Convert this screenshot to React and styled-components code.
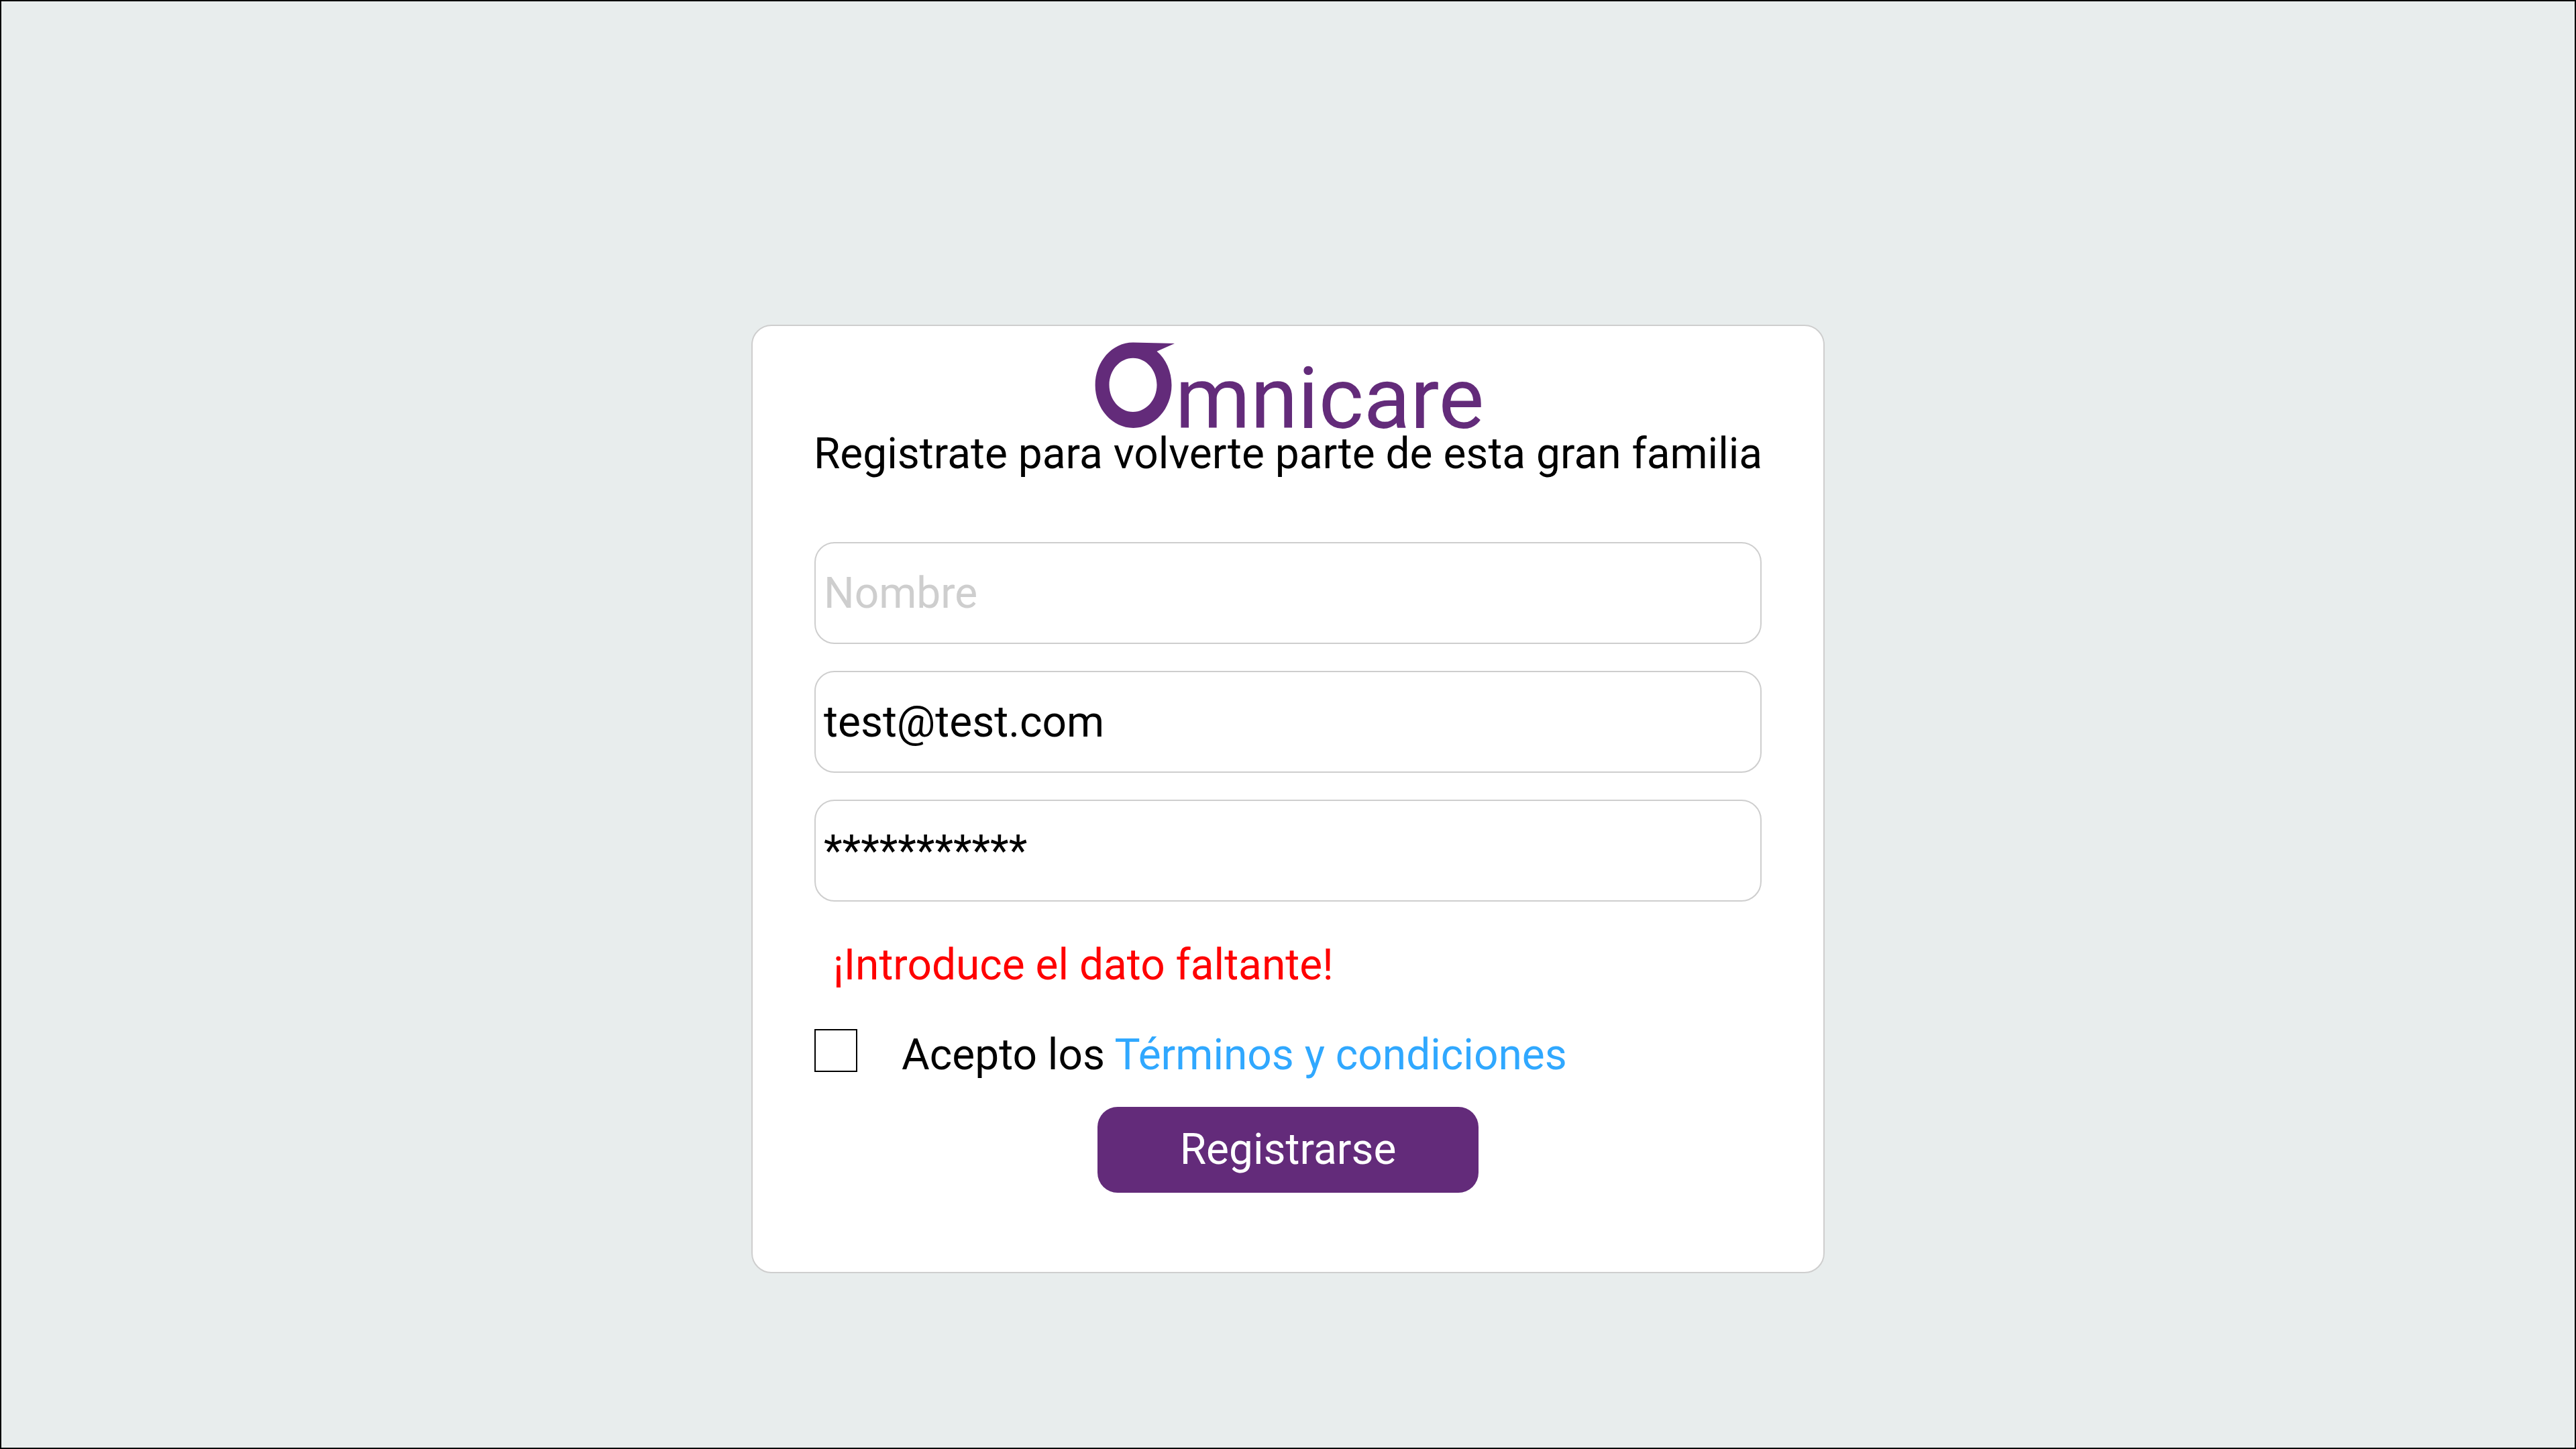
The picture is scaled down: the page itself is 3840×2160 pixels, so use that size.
import React, { useState } from "react";
import styled, { createGlobalStyle } from "styled-components";

const colors = {
  page: "#e8eded",
  line: "#cecece",
  brand: "#632b7a",
  link: "#30a8ff",
  error: "#ff0000",
};

const GlobalStyle = createGlobalStyle`
  *, *::before, *::after { box-sizing: border-box; }
  body {
    margin: 0;
    font-family: Roboto, "Liberation Sans", sans-serif;
    font-size: 64px;
    line-height: 78px;
    color: #000;
  }
`;

const Page = styled.main`
  display: flex;
  flex-direction: column;
  align-items: center;
  min-height: 100vh;
  padding: 482px 40px 120px;
  border: 2px solid #000;
  background: ${colors.page};
`;

const Card = styled.section`
  display: flex;
  flex-direction: column;
  width: 100%;
  max-width: 1600px;
  padding: 24px 92px 118px;
  border: 2px solid ${colors.line};
  border-radius: 30px;
  background: #fff;
`;

const Logo = styled.div`
  display: flex;
  justify-content: center;
  align-items: flex-end;
  padding-left: 4px;
  color: ${colors.brand};
`;

const LogoMark = styled.svg`
  display: block;
  width: 120px;
  height: 128px;
`;

const LogoName = styled.span`
  font-size: 128px;
  line-height: 88px;
`;

const Title = styled.h1`
  display: flex;
  justify-content: center;
  margin: 0 0 92px;
  font-size: inherit;
  font-weight: 400;
  white-space: nowrap;
`;

const Form = styled.form`
  display: flex;
  flex-direction: column;
`;

const Fields = styled.div`
  display: flex;
  flex-direction: column;
  gap: 40px;
`;

const Field = styled.input`
  width: 100%;
  height: 152px;
  margin: 0;
  padding: 0 12px;
  border: 2px solid ${colors.line};
  border-radius: 30px;
  outline: none;
  background: transparent;
  color: #000;
  font: inherit;

  &::placeholder {
    color: ${colors.line};
    opacity: 1;
  }
`;

const ErrorText = styled.p`
  margin: 56px 28px;
  color: ${colors.error};
`;

const Terms = styled.div`
  display: flex;
  align-items: flex-start;
  gap: 66px;
  margin-bottom: 38px;
`;

const Checkbox = styled.input`
  appearance: none;
  flex: none;
  width: 64px;
  height: 64px;
  margin: 0;
  border: 2px solid #000;
  background: #fff;

  &:checked {
    background: ${colors.brand};
  }
`;

const TermsLink = styled.a`
  color: ${colors.link};
  text-decoration: none;
`;

const SubmitButton = styled.button`
  align-self: center;
  width: 568px;
  height: 128px;
  padding: 0;
  border: 0;
  border-radius: 30px;
  background: ${colors.brand};
  color: #fff;
  font: inherit;
  cursor: pointer;
`;

const fields = [
  { name: "name", label: "Nombre", initial: "" },
  { name: "email", label: "Correo", initial: "test@test.com" },
  { name: "password", label: "Contraseña", initial: "***********" },
];

export default function App() {
  const [values, setValues] = useState(() =>
    Object.fromEntries(fields.map((f) => [f.name, f.initial]))
  );
  const [accepted, setAccepted] = useState(false);
  const missing = fields.some((f) => !values[f.name]);

  return (
    <>
      <GlobalStyle />
      <Page>
        <Card>
          <Logo>
            <LogoMark viewBox="0 0 120 128" aria-hidden="true">
              <path
                fill="currentColor"
                fillRule="evenodd"
                d="M57 0.6 L119 2 L92.5 13.8 C106 25 114.5 44 114.5 64.3 C114.5 99.5 88.7 128 57.5 128 C26.3 128 0.6 99.5 0.6 64.3 C0.6 29 26 0.6 57 0.6 Z M57 23.7 C37.4 23.7 21.5 41.7 21.5 63.8 C21.5 86 37.4 104 57 104 C76.6 104 92.5 86 92.5 63.8 C92.5 41.7 76.6 23.7 57 23.7 Z"
              />
            </LogoMark>
            <LogoName>mnicare</LogoName>
          </Logo>
          <Title>Registrate para volverte parte de esta gran familia</Title>
          <Form onSubmit={(e) => e.preventDefault()}>
            <Fields>
              {fields.map((f) => (
                <Field
                  key={f.name}
                  type="text"
                  name={f.name}
                  aria-label={f.label}
                  placeholder={f.label}
                  spellCheck={false}
                  value={values[f.name]}
                  onChange={(e) =>
                    setValues({ ...values, [f.name]: e.target.value })
                  }
                />
              ))}
            </Fields>
            {missing && (
              <ErrorText role="alert">¡Introduce el dato faltante!</ErrorText>
            )}
            <Terms>
              <Checkbox
                id="terms"
                type="checkbox"
                checked={accepted}
                onChange={(e) => setAccepted(e.target.checked)}
              />
              <label htmlFor="terms">
                Acepto los <TermsLink href="#terminos">Términos y condiciones</TermsLink>
              </label>
            </Terms>
            <SubmitButton type="submit">Registrarse</SubmitButton>
          </Form>
        </Card>
      </Page>
    </>
  );
}
